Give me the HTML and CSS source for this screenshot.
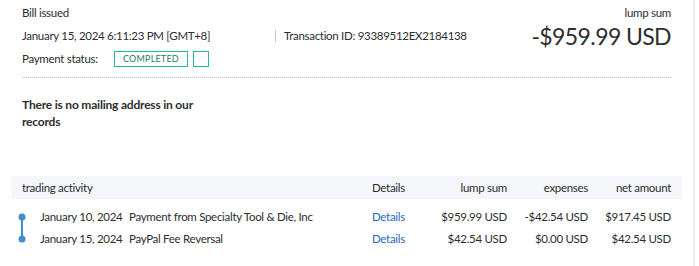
FILE: index.html
```html
<!DOCTYPE html>
<html>
<head>
    <title>Transaction details</title>
    <link rel="stylesheet" href="styles.css">
</head>
<body>
    <div class="page">
        <div class="summary">
            <div class="info">
                <div class="line">Bill issued</div>
                <div class="line meta">
                    <span class="date">January 15, 2024 6:11:23 PM [GMT+8]</span>
                    <span class="sep"></span>
                    <span>Transaction ID: 93389512EX2184138</span>
                </div>
                <div class="line status">
                    <span class="label">Payment status:</span>
                    <span class="badge">COMPLETED</span>
                    <span class="badge empty"></span>
                </div>
            </div>
            <div class="total">
                <div class="line">lump sum</div>
                <div class="amount">-$959.99 USD</div>
            </div>
        </div>

        <p class="address">There is no mailing address in our records</p>

        <div class="activity">
            <div class="grid head">
                <div class="title">trading activity</div>
                <div>Details</div>
                <div class="num">lump sum</div>
                <div class="num">expenses</div>
                <div class="num">net amount</div>
            </div>
            <div class="grid rows">
                <svg class="timeline" width="22" height="44" viewBox="0 0 22 44">
                    <line x1="4" y1="11" x2="4" y2="33" stroke="#3e8fd0" stroke-width="2"/>
                    <circle cx="4" cy="11" r="3.5" fill="#3e8fd0"/>
                    <circle cx="4" cy="33" r="3.5" fill="#3e8fd0"/>
                </svg>
                <div>January 10, 2024</div>
                <div>Payment from Specialty Tool &amp; Die, Inc</div>
                <a href="#">Details</a>
                <div class="num">$959.99 USD</div>
                <div class="num">-$42.54 USD</div>
                <div class="num">$917.45 USD</div>

                <div>January 15, 2024</div>
                <div>PayPal Fee Reversal</div>
                <a href="#">Details</a>
                <div class="num">$42.54 USD</div>
                <div class="num">$0.00 USD</div>
                <div class="num">$42.54 USD</div>
            </div>
        </div>
    </div>
</body>
</html>
```

FILE: styles.css
```css
body {
    margin: 0;
    font-family: Lato, "Open Sans", sans-serif;
    font-size: 11.5px;
    letter-spacing: -0.3px;
    color: #2c2e2f;
    background-color: #fff;
}

.page {
    width: 649px;
    height: 264px;
    padding: 2px 22px 0 22px;
    border-right: 2px solid #ececec;
    margin-right: 4px;
}

.summary {
    display: flex;
    justify-content: space-between;
    padding-bottom: 7px;
    border-bottom: 1px dotted #b8b8b8;
}

.line {
    line-height: 22px;
}

.meta {
    display: flex;
    align-items: center;
    margin-top: 1px;
}

.date {
    width: 253px;
}

.sep {
    width: 1px;
    height: 12px;
    background-color: #c9c9c9;
    margin-right: 8px;
}

.status {
    display: flex;
    align-items: center;
    margin-top: 1px;
}

.status .label {
    width: 84px;
}

.badge {
    display: inline-block;
    margin-left: 8px;
    height: 14px;
    line-height: 14px;
    padding: 0 8px;
    border: 1px solid #1fc28e;
    color: #1a7f63;
    font-size: 9px;
    letter-spacing: 0.2px;
}

.badge.empty {
    margin-left: 5px;
    width: 0;
    padding: 0 7px;
}

.total {
    text-align: right;
}

.amount {
    font-size: 23px;
    line-height: 26px;
    letter-spacing: -0.6px;
    margin-top: -1px;
}

.address {
    width: 200px;
    margin: 18px 0 0 0;
    font-size: 12px;
    font-weight: bold;
    letter-spacing: -0.2px;
    line-height: 17px;
}

.activity {
    margin: 46px -11px 0 -11px;
}

.grid {
    display: grid;
    grid-template-columns: 22px 89px 243px 65px 70px 81px 83px;
    padding: 0 11px 0 7px;
    white-space: nowrap;
}

.head {
    background-color: #f5f6fa;
    line-height: 23px;
}

.head .title {
    grid-column: span 3;
    padding-left: 4px;
}

.rows {
    margin-top: 7px;
    line-height: 22px;
}

.timeline {
    grid-row: span 2;
}

.num {
    text-align: right;
}

a {
    color: #2a6bb5;
    text-decoration: none;
}
```
